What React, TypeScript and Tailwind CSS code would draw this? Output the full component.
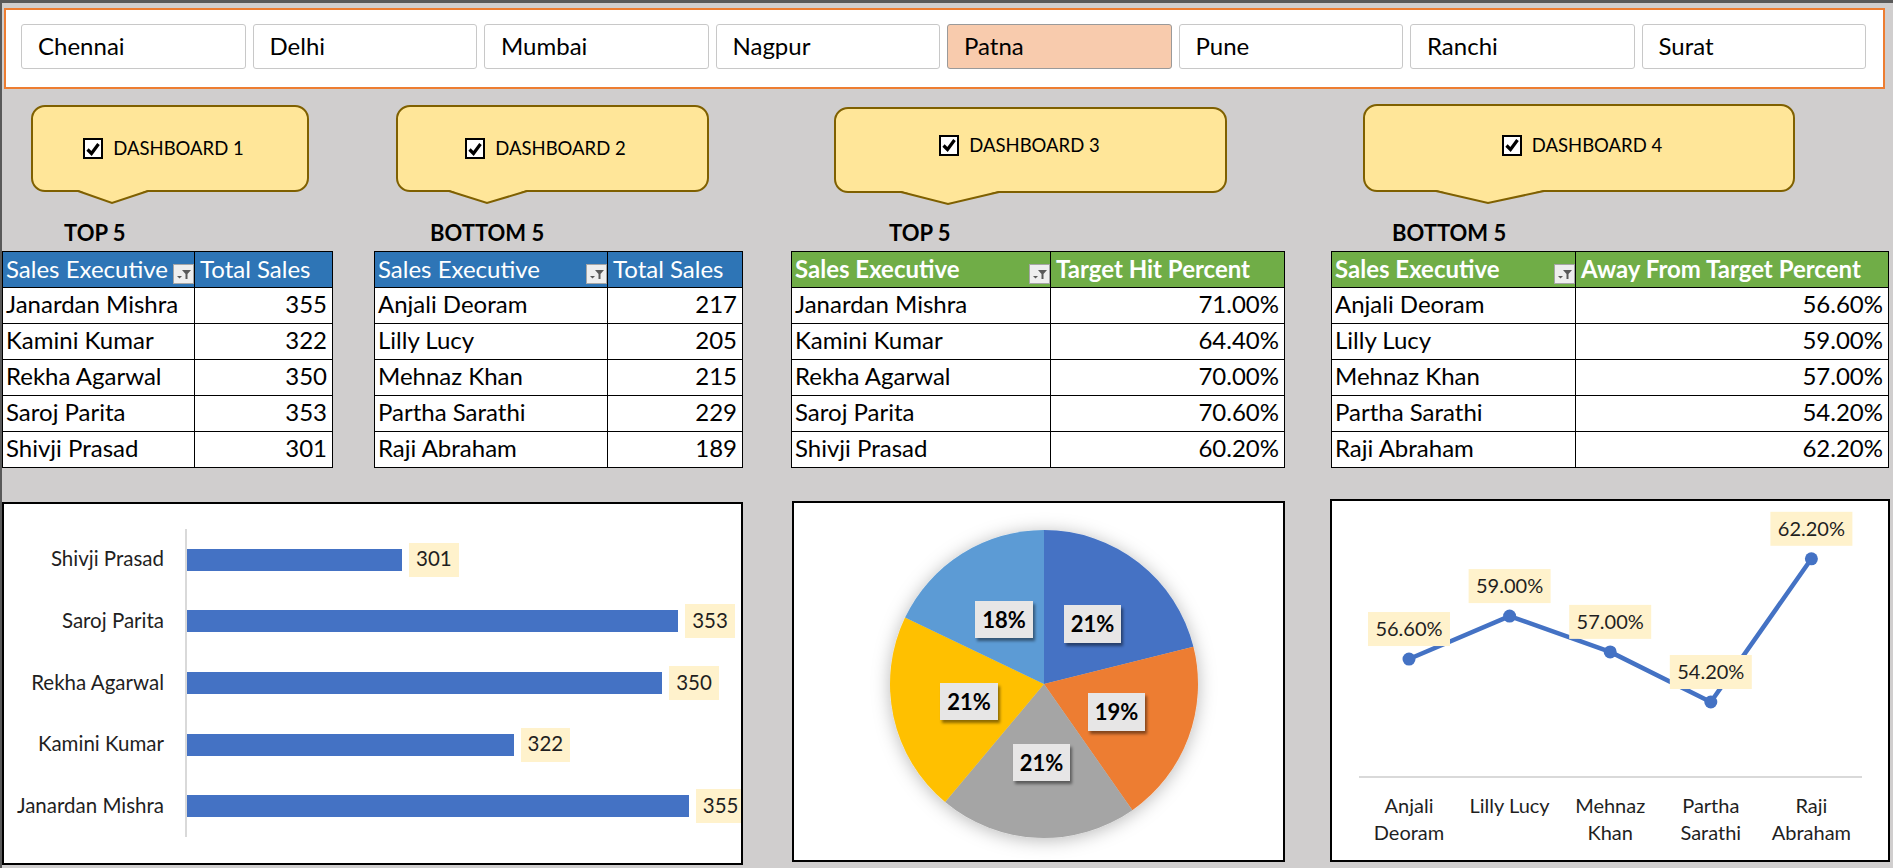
import React from "react";

const CITIES = ["Chennai", "Delhi", "Mumbai", "Nagpur", "Patna", "Pune", "Ranchi", "Surat"];

const TOP_SALES: [string, number][] = [
  ["Janardan Mishra", 355],
  ["Kamini Kumar", 322],
  ["Rekha Agarwal", 350],
  ["Saroj Parita", 353],
  ["Shivji Prasad", 301],
];

const BOTTOM_SALES: [string, number][] = [
  ["Anjali Deoram", 217],
  ["Lilly Lucy", 205],
  ["Mehnaz Khan", 215],
  ["Partha Sarathi", 229],
  ["Raji Abraham", 189],
];

const TOP_HIT: [string, number][] = [
  ["Janardan Mishra", 71.0],
  ["Kamini Kumar", 64.4],
  ["Rekha Agarwal", 70.0],
  ["Saroj Parita", 70.6],
  ["Shivji Prasad", 60.2],
];

const AWAY: [string, number][] = [
  ["Anjali Deoram", 56.6],
  ["Lilly Lucy", 59.0],
  ["Mehnaz Khan", 57.0],
  ["Partha Sarathi", 54.2],
  ["Raji Abraham", 62.2],
];

const CALLOUTS = [
  { label: "DASHBOARD 1", box: "ml-[29px] mt-[1px] w-[278px] h-[87px]", w: 278, inner: "pr-[13px]" },
  { label: "DASHBOARD 2", box: "ml-[87px] mt-[1px] w-[313px] h-[87px]", w: 313, inner: "pr-[14px]" },
  { label: "DASHBOARD 3", box: "ml-[125px] mt-[3px] w-[393px] h-[86px]", w: 393, inner: "pr-[22px] pb-[10px]" },
  { label: "DASHBOARD 4", box: "ml-[136px] mt-0 w-[432px] h-[88px]", w: 432, inner: "pl-[6px] pb-[6px]" },
];

function CheckBox() {
  return (
    <div className="w-[20px] h-[21px] border-2 border-black bg-white flex items-center justify-center">
      <svg width="16" height="16" viewBox="0 0 16 16">
        <path d="M2.5 8.5 L6.5 12.5 L13.5 3" fill="none" stroke="#000" strokeWidth="3.2" />
      </svg>
    </div>
  );
}

function Callout({ label, box, w, inner }: { label: string; box: string; w: number; inner: string }) {
  const bl = Math.round(w * 0.17);
  const br = Math.round(w * 0.42);
  const tip = Math.round(w * 0.29);
  return (
    <div className={`relative shrink-0 ${box}`}>
      <div className={`w-full h-full rounded-[14px] border-2 border-[#7F6000] bg-[#FFE699] flex items-center justify-center gap-[10px] ${inner}`}>
        <CheckBox />
        <span className="text-[18.5px] text-black leading-none">{label}</span>
      </div>
      <svg className="absolute left-0 -bottom-[13px] overflow-visible" width={w} height="15">
        <polygon points={`${bl},0 ${tip},13 ${br},0`} fill="#FFE699" />
        <polyline points={`${bl},1 ${tip},13 ${br},1`} fill="none" stroke="#7F6000" strokeWidth="2" />
      </svg>
    </div>
  );
}

function FilterButton() {
  return (
    <div className="self-end mb-[3px] w-[21px] h-[20px] shrink-0 bg-[#eeeeee] border border-[#a6a6a6]">
      <svg width="19" height="18" viewBox="0 0 19 18">
        <polygon points="8,5 17,5 13.5,9 13.5,14 11.5,14 11.5,9" fill="#595959" />
        <polygon points="3,11 8,11 5.5,13.5" fill="#595959" />
      </svg>
    </div>
  );
}

type TableProps = {
  title: string;
  titlePad: string;
  wrap: string;
  grid: string;
  headBg: string;
  bold?: boolean;
  heads: [string, string];
  rows: [string, string][];
};

function DataTable({ title, titlePad, wrap, grid, headBg, bold, heads, rows }: TableProps) {
  return (
    <div className={`shrink-0 ${wrap}`}>
      <div className={`h-[30px] leading-[24px] text-[22px] font-bold text-black ${titlePad}`}>{title}</div>
      <div className="border border-black bg-white text-[24px] leading-none whitespace-nowrap">
        <div className={`grid ${grid} h-[35px] ${headBg} text-white ${bold ? "font-bold" : ""}`}>
          <div className="flex items-center justify-between pl-[3px] overflow-hidden">
            <span className="pb-[2px]">{heads[0]}</span>
            <FilterButton />
          </div>
          <div className="flex items-center pl-[5px] pb-[2px] border-l border-black overflow-hidden">{heads[1]}</div>
        </div>
        {rows.map(([name, val]) => (
          <div key={name} className={`grid ${grid} h-[36px] border-t border-black`}>
            <div className="flex items-center pl-[3px] pb-[3px] overflow-hidden">{name}</div>
            <div className="flex items-center justify-end pr-[5px] pb-[3px] border-l border-black">{val}</div>
          </div>
        ))}
      </div>
    </div>
  );
}

function BarChart() {
  const data = [...TOP_SALES].reverse();
  return (
    <div className="mt-[3px] w-[741px] h-[363px] shrink-0 overflow-hidden border-2 border-black bg-white pt-[25px]">
      <div className="flex text-[20.5px] text-[#1f1f1f]">
        <div className="w-[160px] shrink-0 flex flex-col">
          {data.map(([n]) => (
            <div key={n} className="h-[61.6px] flex items-center justify-end pb-[2px] whitespace-nowrap">
              {n}
            </div>
          ))}
        </div>
        <div className="ml-[21px] shrink-0 border-l-2 border-[#d9d9d9] flex flex-col">
          {data.map(([n, v]) => (
            <div key={n} className="h-[61.6px] flex items-center">
              <div className="h-[22px] shrink-0 bg-[#4472C4]" style={{ width: (v - 260.5) * 5.31 }} />
              <div className="ml-[7px] h-[34px] px-[7px] pb-[2px] bg-[#FFF2CC] flex items-center">{v}</div>
            </div>
          ))}
        </div>
      </div>
    </div>
  );
}

function PieChart() {
  const cx = 250;
  const cy = 181;
  const r = 154;
  const colors = ["#4472C4", "#ED7D31", "#A5A5A5", "#FFC000", "#5B9BD5"];
  const total = TOP_HIT.reduce((s, [, v]) => s + v, 0);
  let acc = 0;
  const slices = TOP_HIT.map(([n, v], i) => {
    const a0 = (acc / total) * Math.PI * 2;
    acc += v;
    const a1 = (acc / total) * Math.PI * 2;
    const x0 = cx + r * Math.sin(a0);
    const y0 = cy - r * Math.cos(a0);
    const x1 = cx + r * Math.sin(a1);
    const y1 = cy - r * Math.cos(a1);
    const large = a1 - a0 > Math.PI ? 1 : 0;
    return { key: n, d: `M${cx} ${cy} L${x0} ${y0} A${r} ${r} 0 ${large} 1 ${x1} ${y1} Z`, fill: colors[i] };
  });
  const labels = [
    { t: "21%", x: 270, y: 102, w: 57, h: 38 },
    { t: "19%", x: 294, y: 190, w: 57, h: 38 },
    { t: "21%", x: 219, y: 241, w: 57, h: 37 },
    { t: "21%", x: 146, y: 180, w: 58, h: 37 },
    { t: "18%", x: 181, y: 98, w: 58, h: 37 },
  ];
  return (
    <div className="ml-[49px] mt-[2px] w-[493px] h-[361px] shrink-0 border-2 border-black bg-white">
      <svg width="489" height="357" className="block">
        <defs>
          <filter id="pieShadow" x="-20%" y="-20%" width="140%" height="140%">
            <feDropShadow dx="0" dy="2" stdDeviation="9" floodColor="#000" floodOpacity="0.28" />
          </filter>
          <filter id="lblShadow" x="-20%" y="-20%" width="150%" height="150%">
            <feDropShadow dx="2" dy="3" stdDeviation="1.5" floodColor="#000" floodOpacity="0.45" />
          </filter>
        </defs>
        <g filter="url(#pieShadow)">
          {slices.map((s) => (
            <path key={s.key} d={s.d} fill={s.fill} />
          ))}
        </g>
        {labels.map((l, i) => (
          <g key={i}>
            <rect x={l.x} y={l.y} width={l.w} height={l.h} fill="#E7E6E6" filter="url(#lblShadow)" />
            <text
              x={l.x + l.w / 2}
              y={l.y + l.h / 2 + 8}
              textAnchor="middle"
              fontFamily="Lato, sans-serif"
              fontWeight="700"
              fontSize="22"
              fill="#000"
            >
              {l.t}
            </text>
          </g>
        ))}
      </svg>
    </div>
  );
}

function LineChart() {
  const xs = AWAY.map((_, i) => 77 + i * 100.6);
  const ys = AWAY.map(([, v]) => 201 - (v - 54.2) * 17.9);
  const pts = xs.map((x, i) => `${x},${ys[i]}`).join(" ");
  const cats = [["Anjali", "Deoram"], ["Lilly Lucy"], ["Mehnaz", "Khan"], ["Partha", "Sarathi"], ["Raji", "Abraham"]];
  return (
    <div className="ml-[45px] w-[560px] h-[363px] shrink-0 border-2 border-black bg-white">
      <svg width="556" height="359" className="block" fontFamily="Lato, sans-serif">
        <line x1="27" y1="276" x2="530" y2="276" stroke="#d9d9d9" strokeWidth="2" />
        <polyline points={pts} fill="none" stroke="#4472C4" strokeWidth="4.5" strokeLinejoin="round" />
        {xs.map((x, i) => (
          <circle key={i} cx={x} cy={ys[i]} r="6.5" fill="#4472C4" />
        ))}
        {xs.map((x, i) => (
          <g key={`l${i}`}>
            <rect x={x - 41} y={ys[i] - 13 - 34} width="82" height="34" fill="#FFF2CC" />
            <text x={x} y={ys[i] - 13 - 17 + 7} textAnchor="middle" fontSize="20" fill="#1f1f1f">
              {AWAY[i][1].toFixed(2)}%
            </text>
          </g>
        ))}
        {cats.map((c, i) =>
          c.map((t, j) => (
            <text key={`${i}-${j}`} x={xs[i]} y={312 + j * 27} textAnchor="middle" fontSize="20" fill="#1f1f1f">
              {t}
            </text>
          ))
        )}
      </svg>
    </div>
  );
}

export default function App() {
  return (
    <div className="w-[1893px] h-[868px] overflow-hidden bg-[#d0cece] border-t-[3px] border-l-2 border-[#595959] font-[Lato,sans-serif] text-black">
      {/* city slicer */}
      <div className="mt-[5px] ml-[2px] w-[1881px] h-[81px] border-2 border-[#ED7D31] bg-white pl-[15px] pt-[14px]">
        <div className="grid grid-cols-8 gap-[7px] w-[1845px] h-[45px]">
          {CITIES.map((c) => (
            <div
              key={c}
              className={`flex items-center pl-[16px] pb-[2px] rounded-[3px] border text-[24px] ${
                c === "Patna" ? "bg-[#F8CBAD] border-[#9a9a9a]" : "bg-white border-[#c8c8c8]"
              }`}
            >
              {c}
            </div>
          ))}
        </div>
      </div>

      {/* dashboard callouts */}
      <div className="mt-[15px] h-[117px] flex items-start">
        {CALLOUTS.map((c) => (
          <Callout key={c.label} {...c} />
        ))}
      </div>

      {/* tables */}
      <div className="flex items-start">
        <DataTable
          title="TOP 5"
          titlePad="pl-[62px]"
          wrap="w-[331px]"
          grid="grid-cols-[191px_1fr]"
          headBg="bg-[#2E75B6]"
          heads={["Sales Executive", "Total Sales"]}
          rows={TOP_SALES.map(([n, v]) => [n, String(v)])}
        />
        <DataTable
          title="BOTTOM 5"
          titlePad="pl-[56px]"
          wrap="ml-[41px] w-[369px]"
          grid="grid-cols-[232px_1fr]"
          headBg="bg-[#2E75B6]"
          heads={["Sales Executive", "Total Sales"]}
          rows={BOTTOM_SALES.map(([n, v]) => [n, String(v)])}
        />
        <DataTable
          title="TOP 5"
          titlePad="pl-[98px]"
          wrap="ml-[48px] w-[494px]"
          grid="grid-cols-[258px_1fr]"
          headBg="bg-[#70AD47]"
          bold
          heads={["Sales Executive", "Target Hit Percent"]}
          rows={TOP_HIT.map(([n, v]) => [n, `${v.toFixed(2)}%`])}
        />
        <DataTable
          title="BOTTOM 5"
          titlePad="pl-[61px]"
          wrap="ml-[46px] w-[558px]"
          grid="grid-cols-[243px_1fr]"
          headBg="bg-[#70AD47]"
          bold
          heads={["Sales Executive", "Away From Target Percent"]}
          rows={AWAY.map(([n, v]) => [n, `${v.toFixed(2)}%`])}
        />
      </div>

      {/* charts */}
      <div className="mt-[31px] flex items-start">
        <BarChart />
        <PieChart />
        <LineChart />
      </div>
    </div>
  );
}
